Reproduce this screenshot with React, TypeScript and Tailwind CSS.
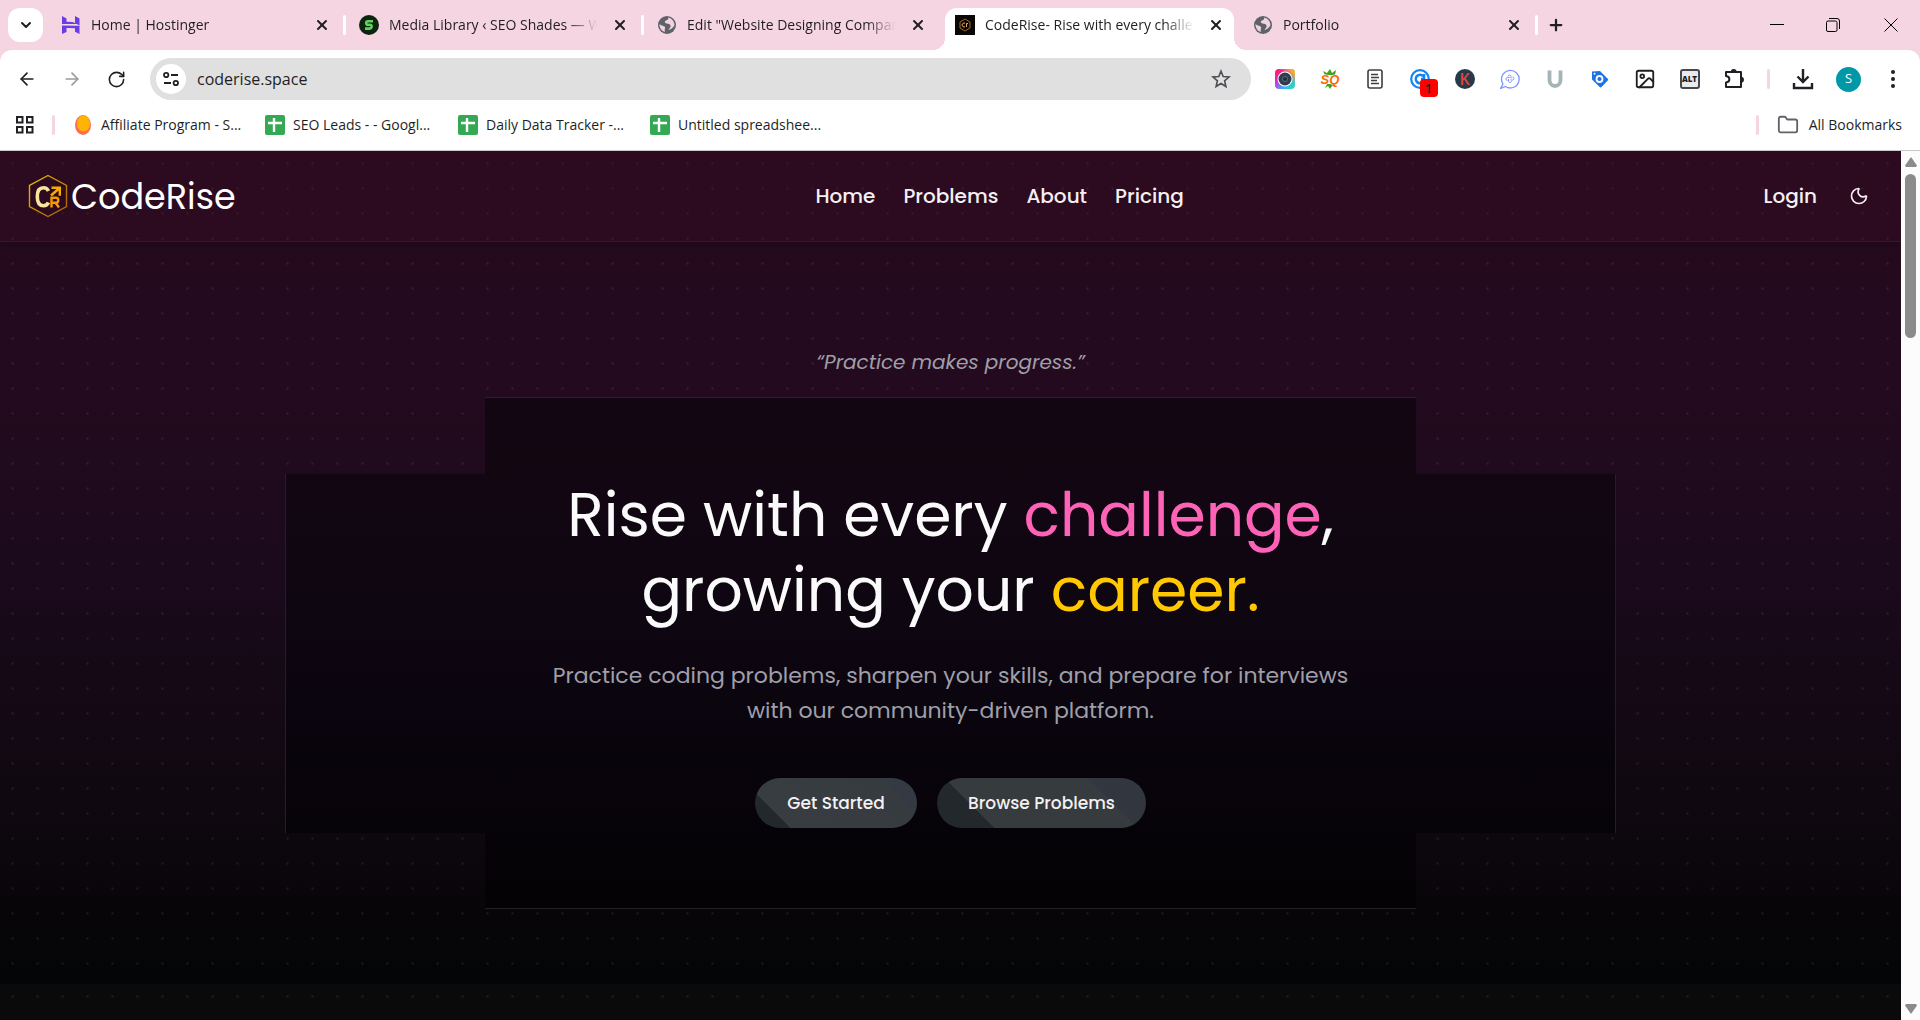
import type { ReactNode } from "react";
import {
  ArrowLeft,
  ArrowRight,
  ChevronDown,
  Folder,
  Image as ImageIcon,
  Moon,
  Plus,
  RotateCw,
  X,
} from "lucide-react";

function HostingerIcon() {
  return (
    <svg viewBox="0 0 20 20" className="w-5 h-5" fill="#673de6">
      <path d="M1 9V1l4.500 2.400v3.400l6 .1L16 9zM14 8V3.400L14 1l4.500 2.400v7zM1 19v-8.400l13.600.1h3.900V19L14 16.800v-3.600l-6-.1-2.500-.1v4z" />
    </svg>
  );
}

function ShadesIcon() {
  return (
    <svg viewBox="0 0 20 20" className="w-5 h-5">
      <circle cx="10" cy="10" r="10" fill="#0c2410" />
      <path d="M14 6.200H9q-1.800 0-1.800 1.800t1.800 1.800h2q1.800 0 1.600 1.900t-2 1.900H6" fill="none" stroke="#5fd35b" strokeWidth="2.600" />
    </svg>
  );
}

function GlobeIcon() {
  return (
    <svg viewBox="0 0 20 20" className="w-5 h-5">
      <circle cx="10" cy="10" r="9" fill="#5f6368" />
      <path d="M11 2.500c1 2-1 2.500-2.500 3.200S8 8 9.500 8.500s3.500 0 4 2-1 2.500-2 4.500c2.500-.5 5.500-2.800 6-5.500-.8-4-3-6.400-6.500-7zM2.500 9c1.500 1.500 3.500 1.500 5 2.500s-.5 2.500.5 5.500C4.800 16.200 2.300 13 2.500 9z" fill="#f0d3e0" />
    </svg>
  );
}

function CodeRiseFavicon() {
  return (
    <svg viewBox="0 0 20 20" className="w-5 h-5">
      <rect width="20" height="20" fill="#0a0807" />
      <path d="M10 4l5 3v6l-5 3-5-3V7z" fill="none" stroke="#a8641a" />
      <path d="M10 8.200a2 2 0 1 0 0 3.600M11.500 12V8.500h1.500" fill="none" stroke="#d9b070" />
    </svg>
  );
}

function SheetIcon() {
  return (
    <svg viewBox="0 0 20 20" className="w-5 h-5">
      <rect width="20" height="20" rx="2" fill="#34a853" />
      <path d="M9 3v14M3 8h14" stroke="#fff" strokeWidth="2.400" />
    </svg>
  );
}

function LogoMark() {
  return (
    <svg viewBox="0 0 40 44" className="w-10 h-11" fill="none">
      <defs>
        <linearGradient id="hex" x1="0" y1="0" x2="1" y2="1">
          <stop offset="0" stopColor="#e8c400" />
          <stop offset="1" stopColor="#a85a00" />
        </linearGradient>
      </defs>
      <path d="M20 1.500l18.500 10v21L20 42.500l-18.500-10v-21z" stroke="url(#hex)" strokeWidth="1.400" />
      <path d="M20.500 17c-1-2.200-2.500-3.200-5-3.200-4 0-6.200 3-6.200 9s2.200 9 6.200 9c2.500 0 4-1 5-3.200" stroke="#f8e3a0" strokeWidth="3.600" />
      <path d="M23.500 33.500V23.800h4.500c3 0 3 5 0 5h-4.500M27.500 28.800l3.500 4.700" stroke="#f59a00" strokeWidth="2.400" />
      <path d="M23 21.500l8-7M23.500 13.800h8.300v8" stroke="#f5ae00" strokeWidth="2.400" />
    </svg>
  );
}

const tabs: { title: string; icon: ReactNode; active?: boolean; divider?: boolean }[] = [
  { title: "Home | Hostinger", icon: <HostingerIcon />, divider: true },
  { title: "Media Library ‹ SEO Shades — WordPress", icon: <ShadesIcon />, divider: true },
  { title: 'Edit "Website Designing Company', icon: <GlobeIcon /> },
  { title: "CodeRise- Rise with every challenge", icon: <CodeRiseFavicon />, active: true },
  { title: "Portfolio", icon: <GlobeIcon />, divider: true },
];

function TabStrip() {
  return (
    <div className="flex h-[50px] items-center bg-[#f6d5e3] pl-2">
      <button aria-label="Search tabs" className="flex h-[34px] w-[35px] shrink-0 items-center justify-center rounded-xl bg-white">
        <ChevronDown size={16} strokeWidth={3} />
      </button>
      <div className="ml-2 flex h-full min-w-0 items-center">
        {tabs.map((tab) => (
          <div key={tab.title} className="flex h-full w-[298px] min-w-0 items-center">
            <div
              className={
                tab.active
                  ? "relative mt-2 flex h-[42px] min-w-0 flex-1 items-center gap-2.5 rounded-t-xl bg-white px-2.5 pb-2"
                  : "flex h-[34px] min-w-0 flex-1 items-center gap-2.5 px-2.5"
              }
            >
              {tab.active && (
                <>
                  <span className="absolute bottom-0 -left-3 h-3 w-3 bg-[radial-gradient(circle_at_0_0,#f6d5e3_12px,#fff_12px)]" />
                  <span className="absolute bottom-0 -right-3 h-3 w-3 bg-[radial-gradient(circle_at_100%_0,#f6d5e3_12px,#fff_12px)]" />
                </>
              )}
              <span className="shrink-0">{tab.icon}</span>
              <span className="min-w-0 flex-1 overflow-hidden whitespace-nowrap text-[14px] leading-5 [mask-image:linear-gradient(to_right,black_84%,transparent_98%)]">
                {tab.title}
              </span>
              <button aria-label={`Close ${tab.title}`} className="shrink-0">
                <X size={16} strokeWidth={3} />
              </button>
            </div>
            <span className={tab.divider ? "mx-[3px] h-5 w-[3px] rounded-full bg-white" : "mx-[3px] w-[3px]"} />
          </div>
        ))}
      </div>
      <button aria-label="New tab" className="ml-1.5 shrink-0">
        <Plus size={18} strokeWidth={3} />
      </button>
      <div className="ml-auto flex shrink-0 pr-[22px]">
        <button aria-label="Minimize" className="mr-[42px]">
          <svg viewBox="0 0 14 14" className="h-3.5 w-3.5" stroke="#000" fill="none">
            <path d="M0 6.500h14" />
          </svg>
        </button>
        <button aria-label="Restore" className="mr-[44px]">
          <svg viewBox="0 0 14 14" className="h-3.5 w-3.5" stroke="#000" fill="none">
            <rect x="0.500" y="3" width="10.500" height="10.500" rx="1.500" />
            <path d="M3 .5h8a2.500 2.500 0 0 1 2.500 2.500v8" />
          </svg>
        </button>
        <button aria-label="Close window">
          <svg viewBox="0 0 14 14" className="h-3.5 w-3.5" stroke="#000" fill="none">
            <path d="M.5 .5l13 13M13.500 .5l-13 13" />
          </svg>
        </button>
      </div>
    </div>
  );
}

const extensions: { name: string; icon: ReactNode }[] = [
  {
    name: "Screenshot",
    icon: (
      <svg viewBox="0 0 20 20" className="w-5 h-5">
        <defs>
          <linearGradient id="cam" x1="0" y1="0" x2="1" y2="1">
            <stop offset="0" stopColor="#ff2a2a" />
            <stop offset="0.3" stopColor="#e81fd0" />
            <stop offset="0.700" stopColor="#35b6ff" />
            <stop offset="1" stopColor="#39e08a" />
          </linearGradient>
          <linearGradient id="camTop" x1="0" y1="1" x2="1" y2="0">
            <stop offset="0.600" stopColor="#ffb020" stopOpacity="0" />
            <stop offset="0.900" stopColor="#ffb020" />
          </linearGradient>
        </defs>
        <rect width="20" height="20" rx="4" fill="url(#cam)" />
        <rect width="20" height="20" rx="4" fill="url(#camTop)" />
        <circle cx="10" cy="10" r="7.500" fill="#fff" />
        <circle cx="10" cy="10" r="6.500" fill="#333c48" />
        <circle cx="10" cy="10" r="2.500" fill="#1b2a3d" stroke="#56708f" />
      </svg>
    ),
  },
  {
    name: "SEOquake",
    icon: (
      <svg viewBox="0 0 20 20" className="w-5 h-5">
        <path d="M3 2l4 2 3-4 2 4 4-3-1 5H5zM5 19l2-4h8l1 3-4-1-2 3-2-3z" fill="#3fa31c" />
        <text x="10" y="15" textAnchor="middle" fontSize="13" fontWeight="900" fontStyle="italic" fill="#ff6a00" stroke="#fff" strokeWidth="1" paintOrder="stroke" fontFamily="Liberation Sans, sans-serif">
          SQ
        </text>
      </svg>
    ),
  },
  {
    name: "Reader",
    icon: (
      <svg viewBox="0 0 20 20" className="w-5 h-5" fill="none" stroke="#3c4043">
        <rect x="3" y="1" width="14" height="18" rx="2" strokeWidth="1.600" />
        <path d="M6 5.500h7M6 8.500h8M6 11.500h6M6 14.500h8" strokeWidth="1.400" />
      </svg>
    ),
  },
  {
    name: "Copyright check",
    icon: (
      <span className="relative block h-5 w-5">
        <svg viewBox="0 0 20 20" className="w-5 h-5" fill="none" stroke="#1285f5">
          <path d="M18.800 10a8.800 8.800 0 1 0-8.800 8.800" strokeWidth="2.200" />
          <path d="M13 7a4.200 4.200 0 1 0 0 6M14 5v5h-3" strokeWidth="2.600" />
        </svg>
        <span className="absolute left-2.5 top-2.5 flex h-[18px] w-[18px] items-center justify-center rounded bg-[#f00] text-[13px] font-semibold leading-none">
          1
        </span>
      </span>
    ),
  },
  {
    name: "Keywords Everywhere",
    icon: (
      <span className="flex h-5 w-5 items-center justify-center rounded-full bg-[#263a48] text-[16px] font-semibold leading-none text-[#e2453c]">
        K
      </span>
    ),
  },
  {
    name: "Chat assistant",
    icon: (
      <svg viewBox="0 0 20 20" className="w-5 h-5" fill="none" stroke="#8094ff">
        <path d="M.500 19.500l2.500-4.500a8.800 8.800 0 1 1 2.500 2.500z" strokeWidth="1.300" />
        <path d="M8 7.500c0-2 3-2 3 0v2M12.500 8c2 0 2 3 0 3h-2M11.500 12c0 2-3 2-3 0v-2M7.500 11.500c-2 0-2-3 0-3h2" strokeWidth="1" />
      </svg>
    ),
  },
  {
    name: "Ubersuggest",
    icon: (
      <svg viewBox="0 0 20 20" className="w-5 h-5" fill="none" stroke="#a6b4b8" strokeWidth="3.800">
        <path d="M4.500 1.500v9.500c0 8 11 8 11 0V1.500" />
      </svg>
    ),
  },
  {
    name: "Tag Assistant",
    icon: (
      <svg viewBox="0 0 20 20" className="w-5 h-5">
        <path d="M2 2.500l8-.5 7.500 7.500c.8.800.8 1.500 0 2.300l-5.700 6c-.8.800-1.600.8-2.400 0L2 10.500z" fill="#1a73e8" />
        <circle cx="9.500" cy="10" r="3" fill="none" stroke="#fff" strokeWidth="1.800" />
        <circle cx="4.500" cy="4.800" r="1" fill="#fff" />
      </svg>
    ),
  },
  { name: "Image search", icon: <ImageIcon size={22} strokeWidth={2} /> },
  {
    name: "Alt text",
    icon: (
      <span className="flex h-5 w-5 items-center justify-center rounded-[3px] border-2 border-[#44474b] bg-[#e8eaed] text-[8px] font-extrabold leading-none">
        ALT
      </span>
    ),
  },
  {
    name: "Extensions",
    icon: (
      <svg viewBox="0 0 22 22" className="h-[22px] w-[22px]" fill="none" stroke="#1f2124" strokeWidth="2">
        <path d="M2 4h15v15H2v-4.500c4.500-.5 4.500-6 0-6.500z" strokeLinejoin="round" />
        <path d="M7.500 4a2.200 2.200 0 0 1 4.400 0zM17 9.500a2.200 2.200 0 0 1 0 4.400z" fill="#1f2124" strokeWidth="1.500" />
      </svg>
    ),
  },
];

function Toolbar() {
  return (
    <div className="flex h-[58px] items-center pl-[17px] pr-[17px]">
      <div className="flex shrink-0 items-center gap-[25px]">
        <button aria-label="Back">
          <ArrowLeft size={20} strokeWidth={2} />
        </button>
        <button aria-label="Forward" className="text-[#9b9b9b]">
          <ArrowRight size={20} strokeWidth={2} />
        </button>
        <button aria-label="Reload">
          <RotateCw size={19} strokeWidth={2} />
        </button>
      </div>
      <div className="ml-6 flex h-[42px] min-w-0 flex-1 items-center rounded-full bg-[#e0e0e0] pl-1.5 pr-5">
        <button aria-label="Site information" className="flex h-[30px] w-[30px] shrink-0 items-center justify-center rounded-full bg-white">
          <svg viewBox="0 0 16 16" className="h-4 w-4" fill="none" stroke="#1f2124" strokeWidth="1.800">
            <circle cx="3.200" cy="4" r="2.200" />
            <path d="M8 4h7M1 12h7" />
            <circle cx="12.800" cy="12" r="2.200" />
          </svg>
        </button>
        <input
          aria-label="Address"
          defaultValue="coderise.space"
          className="ml-[11px] min-w-0 flex-1 bg-transparent text-[16px] leading-6 outline-none"
        />
        <button aria-label="Bookmark this page" className="shrink-0">
          <svg viewBox="0 0 20 20" className="h-5 w-5" fill="none" stroke="#4b4e52" strokeWidth="1.600">
            <path d="M10 2.200l2.200 5.300 5.800.5-4.400 3.800 1.300 5.700-4.900-3-4.900 3 1.300-5.700L2 8l5.800-.5z" />
          </svg>
        </button>
      </div>
      <div className="ml-[11px] flex shrink-0 items-center">
        {extensions.map((ext) => (
          <button key={ext.name} aria-label={ext.name} className="flex w-[45px] shrink-0 justify-center">
            {ext.icon}
          </button>
        ))}
        <span className="ml-2.5 mr-[22px] h-5 w-[3px] rounded-full bg-[#f6d5e3]" />
        <button aria-label="Downloads">
          <svg viewBox="0 0 22 22" className="h-[22px] w-[22px]" fill="none" stroke="#1f2124" strokeWidth="2.400">
            <path d="M11 1v12M5.500 8.500L11 14l5.500-5.500M2 15v5h18v-5" />
          </svg>
        </button>
        <button aria-label="Profile" className="ml-[22px] flex h-[25px] w-[25px] items-center justify-center rounded-full bg-[#0097a7] text-[13px] text-white">
          S
        </button>
        <button aria-label="Menu" className="ml-[22px]">
          <svg viewBox="0 0 20 20" className="h-5 w-5" fill="#1f2124">
            <circle cx="10" cy="3" r="2" />
            <circle cx="10" cy="10" r="2" />
            <circle cx="10" cy="17" r="2" />
          </svg>
        </button>
      </div>
    </div>
  );
}

function BookmarksBar() {
  return (
    <div className="flex h-[43px] items-center border-b border-[#c9c9c9] pb-[9px] pl-[15px] pr-[18px] text-[14px] leading-5">
      <button aria-label="Apps">
        <svg viewBox="0 0 20 20" className="h-5 w-5" fill="none" stroke="#1f2124" strokeWidth="2">
          <rect x="2" y="2" width="5.500" height="5.500" />
          <rect x="12" y="2" width="5.500" height="5.500" />
          <rect x="2" y="12" width="5.500" height="5.500" />
          <rect x="12" y="12" width="5.500" height="5.500" />
        </svg>
      </button>
      <span className="ml-[17px] h-5 w-[3px] rounded-full bg-[#f6d5e3]" />
      <div className="ml-[18px] flex items-center gap-5">
        <a href="#affiliate" className="flex w-[172px] items-center gap-2 whitespace-nowrap">
          <svg viewBox="0 0 20 20" className="h-5 w-5 shrink-0">
            <ellipse cx="10" cy="10" rx="8" ry="10" fill="#ff6b57" />
            <ellipse cx="10.500" cy="8.500" rx="6.500" ry="8" fill="#ffb400" />
          </svg>
          Affiliate Program - S...
        </a>
        <a href="#leads" className="flex w-[173px] items-center gap-2 whitespace-nowrap">
          <SheetIcon />
          SEO Leads - - Googl...
        </a>
        <a href="#tracker" className="flex w-[172px] items-center gap-2 whitespace-nowrap">
          <SheetIcon />
          Daily Data Tracker -...
        </a>
        <a href="#untitled" className="flex w-[172px] items-center gap-2 whitespace-nowrap">
          <SheetIcon />
          Untitled spreadshee...
        </a>
      </div>
      <span className="ml-auto h-5 w-[3px] rounded-full bg-[#f6d5e3]" />
      <button className="ml-[18px] flex items-center gap-2.5 whitespace-nowrap">
        <Folder size={22} strokeWidth={2} className="text-[#5f6368]" />
        All Bookmarks
      </button>
    </div>
  );
}

function SiteHeader() {
  return (
    <header className="flex h-[91px] items-center justify-between border-b border-white/5 bg-[#400a24]/25 pl-7 pr-8 shadow-lg shadow-black/10">
      <a href="#home" className="flex items-center gap-[3px] text-[35px] leading-none text-white">
        <LogoMark />
        CodeRise
      </a>
      <nav className="flex gap-7 text-[20px] font-medium leading-7">
        <a href="#home">Home</a>
        <a href="#problems">Problems</a>
        <a href="#about">About</a>
        <a href="#pricing">Pricing</a>
      </nav>
      <div className="flex items-center gap-8 text-[20px] font-medium leading-7">
        <a href="#login">Login</a>
        <button aria-label="Toggle theme">
          <Moon size={20} strokeWidth={2} />
        </button>
      </div>
    </header>
  );
}

function Hero() {
  return (
    <section className="flex flex-col items-center pb-[75px] pt-[106px] text-center">
      <p className="text-[20px] italic leading-7 text-[#9f9fa9]">“Practice makes progress.”</p>

      {/* Cross-shaped panel */}
      <div className="mt-[21px] flex w-[70%] flex-col items-center">
        <div className="h-[77px] w-[70%] border-t border-[#2c1d2b] bg-linear-to-b from-[#130613] to-[#120611]" />
        <div className="flex w-full flex-col items-center border-x border-[#291c29] bg-linear-to-b from-[#120611] via-[#0d0611] to-[#060308] pb-[5px] pt-1">
          <h1 className="text-[60px] leading-[75px] text-[#fafafa]">
            Rise with every <span className="text-[#ff63b8]">challenge</span>,
            <br />
            growing your <span className="text-[#ffc800]">career.</span>
          </h1>
          <p className="mt-[30px] text-[22px] leading-[35px] text-[#9f9fa9]">
            Practice coding problems, sharpen your skills, and prepare for interviews
            <br />
            with our community-driven platform.
          </p>
          <div className="mt-[50px] flex gap-5 text-[17px] font-medium leading-7">
            <button className="h-[50px] w-[162px] rounded-full bg-[linear-gradient(45deg,#22282c_25px,#373d40_25px,#363b40_125px,#343a43_125px)]">
              Get Started
            </button>
            <button className="h-[50px] w-[209px] rounded-full bg-[linear-gradient(45deg,#22282c_41px,#363b3e_41px,#363b3f_142px,#31363f_142px)]">
              Browse Problems
            </button>
          </div>
        </div>
        <div className="h-[76px] w-[70%] border-b border-[#232125] bg-linear-to-b from-[#060308] to-[#040204]" />
      </div>
    </section>
  );
}

function Scrollbar() {
  return (
    <div className="flex w-[19px] shrink-0 flex-col items-center bg-[#fcfcfc] py-1.5">
      <svg viewBox="0 0 12 10" className="h-2.5 w-3" fill="#8b8b8b">
        <path d="M6 0l6 8.500-1 1.500H1L0 8.500z" />
      </svg>
      <div className="mt-[7px] h-[164px] w-[11px] rounded-full bg-[#8b8b8b]" />
      <svg viewBox="0 0 12 10" className="mt-auto h-2.5 w-3" fill="#8b8b8b">
        <path d="M6 10l6-8.500L11 0H1L0 1.500z" />
      </svg>
    </div>
  );
}

export default function App() {
  return (
    <div className="flex h-screen flex-col overflow-hidden bg-white font-['Segoe_UI','Open_Sans',sans-serif] text-[#1f1f1f]">
      <TabStrip />
      <div className="bg-[#f6d5e3]">
        <div className="rounded-t-xl bg-white">
          <Toolbar />
          <BookmarksBar />
        </div>
      </div>
      <div className="flex min-h-0 flex-1">
        <main className="min-w-0 flex-1 overflow-hidden bg-[#090a09] font-['Poppins','Inter',sans-serif] text-[#f4f0f2]">
          <div className="bg-[radial-gradient(circle,#ffffff16_0px,transparent_2px),linear-gradient(to_bottom,#270a1e,#230a1e_30%,#1b0a1c_50%,#0f0810_78%,#070508_93%,#040506)] bg-[size:25px_25px,100%_100%]">
            <SiteHeader />
            <Hero />
          </div>
          <div className="h-[200px] bg-[radial-gradient(circle,#ffffff16_0px,transparent_2px)] bg-[size:25px_25px]" />
        </main>
        <Scrollbar />
      </div>
    </div>
  );
}
